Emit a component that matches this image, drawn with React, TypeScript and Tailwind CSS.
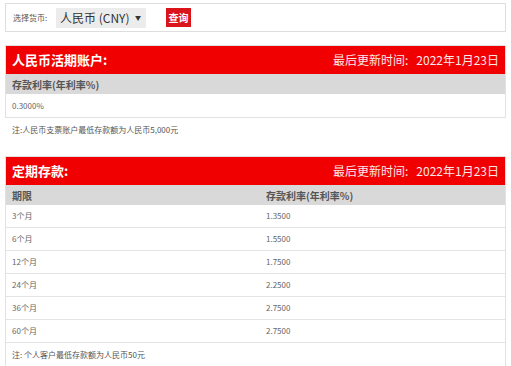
const FIXED = [
  { term: '3个月', rate: '1.3500' },
  { term: '6个月', rate: '1.5500' },
  { term: '12个月', rate: '1.7500' },
  { term: '24个月', rate: '2.2500' },
  { term: '36个月', rate: '2.7500' },
  { term: '60个月', rate: '2.7500' },
];

function RedHeader({ title }: { title: string }) {
  return (
    <div className="flex items-center justify-between h-[28px] bg-[#f00000] px-[6px] text-white">
      <span className="text-[13px] font-bold">{title}</span>
      <span className="text-[12px] text-[#fde8e8]">最后更新时间:&nbsp;&nbsp;&nbsp;2022年1月23日</span>
    </div>
  );
}

export default function App() {
  return (
    <div
      className="w-[511px] h-[366px] overflow-hidden bg-white text-[#444] px-[5px] pt-[3px]"
      style={{ fontFamily: '"Noto Sans CJK SC", "Noto Sans", sans-serif' }}
    >
      <div className="flex items-center h-[29px] border border-[#dedede] pl-[7px]">
        <span className="text-[8px] text-[#555] w-[43px]">选择货币:</span>
        <div className="flex items-center justify-between w-[90px] h-[20px] bg-[#ececec] pl-[4px] pr-[5px]">
          <span className="text-[12px] text-[#333]">人民币 (CNY)</span>
          <span className="text-[6px] text-[#333]">▼</span>
        </div>
        <div className="ml-[20px] flex items-center justify-center w-[25px] h-[19px] bg-[#d9141b] text-white text-[10px] font-bold">
          查询
        </div>
      </div>

      <div className="mt-[13px] border border-[#e2e2e2]">
        <RedHeader title="人民币活期账户:" />
        <div className="h-[20px] bg-[#d9d9d9] flex items-center px-[6px] text-[10px] font-bold text-[#555]">
          存款利率(年利率%)
        </div>
        <div className="h-[23px] flex items-center px-[6px] text-[8px] text-[#666]">0.3000%</div>
      </div>

      <div className="h-[24px] flex items-center pl-[7px] text-[8px] text-[#555]">
        注:人民币支票账户最低存款额为人民币5,000元
      </div>

      <div className="mt-[14px] border border-[#e2e2e2]">
        <RedHeader title="定期存款:" />
        <div className="h-[20px] bg-[#d9d9d9] grid grid-cols-[254px_1fr] items-center px-[6px] text-[10px] font-bold text-[#555]">
          <span>期限</span>
          <span>存款利率(年利率%)</span>
        </div>
        {FIXED.map((r) => (
          <div
            key={r.term}
            className="h-[23px] grid grid-cols-[254px_1fr] items-center px-[6px] text-[8px] text-[#666] border-b border-[#e4e4e4]"
          >
            <span>{r.term}</span>
            <span>{r.rate}</span>
          </div>
        ))}
        <div className="h-[24px] flex items-center px-[6px] text-[8px] text-[#555]">
          注: 个人客户最低存款额为人民币50元
        </div>
      </div>
    </div>
  );
}
